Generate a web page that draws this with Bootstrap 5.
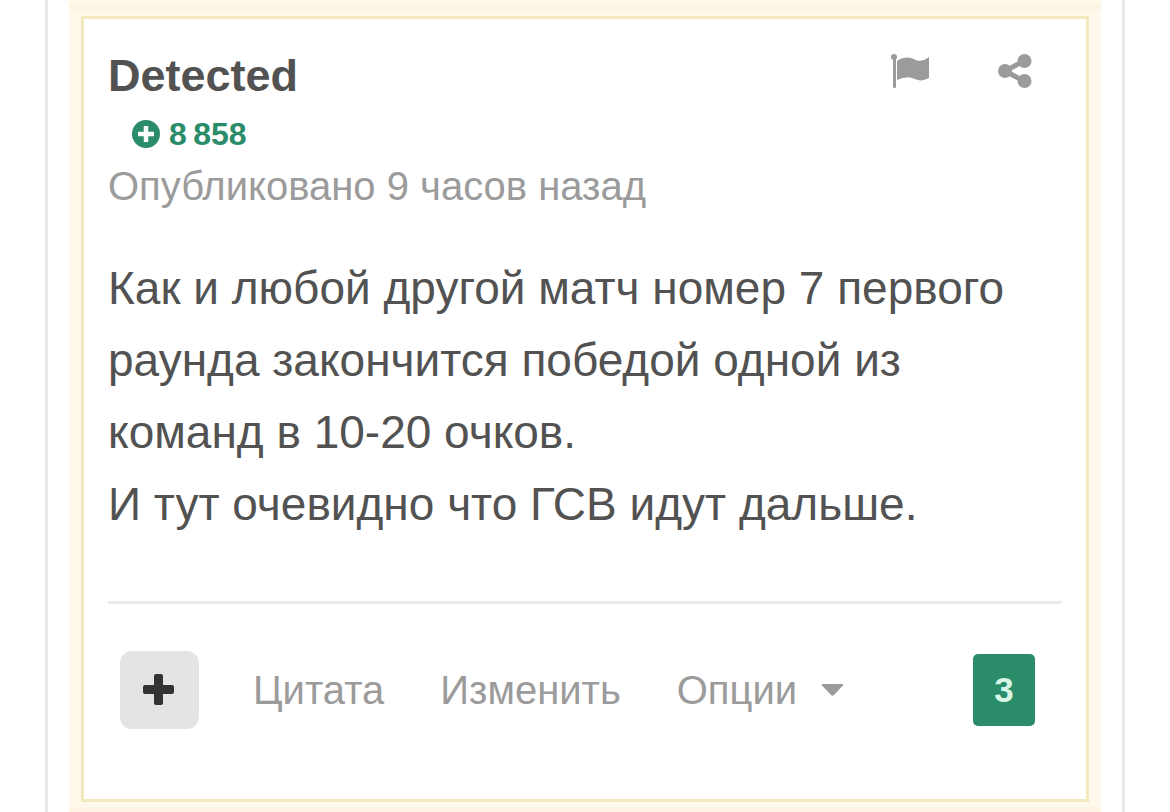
<!DOCTYPE html>
<html lang="ru">
<head>
<meta charset="utf-8">
<meta name="viewport" content="width=device-width, initial-scale=1">
<title>Комментарий</title>
<link href="https://cdn.jsdelivr.net/npm/bootstrap@5.3.0/dist/css/bootstrap.min.css" rel="stylesheet">
<style>
body { font-family: "Liberation Sans", Arial, sans-serif; color: #525252; background: #fff; }
a { text-decoration: none; }
.page-frame { margin: 0 45px; border: solid #e9e9ea; border-width: 0 3px; padding: 0 21px; }
.highlight { background: #fef9eb; padding: 4px 12px 0; }
.highlight::before { content: ""; display: block; height: 6px; margin: 0 -12px 6px; background: #fdf5e4; }
.highlight::after { content: ""; display: block; height: 5px; margin: 5px -12px 0; background: #fdf4e4; }
.post { border: 3px solid #f4e8bd; background: #fff; padding: 32px 24px 70px; }
.author { font-size: 45px; line-height: 50px; font-weight: 700; color: #525252; }
.tools { gap: 67px; margin-right: 29px; padding-top: 2px; }
.muted { color: #9b9b9b; }
.rep { font-size: 32px; line-height: 36px; color: #2a8c68; margin: 15px 0 0 24px; gap: 9px; }
.date { font-size: 40px; line-height: 48px; margin-top: 10px; }
.post-text { font-size: 46px; line-height: 72px; margin: 42px 0 0; padding-right: 24px; }
.rule { border-top: 3px solid #ebebeb; opacity: 1; margin: 61px 0 47px; }
.actions { font-size: 40px; line-height: 48px; padding: 0 27px 0 12px; }
.quick { gap: 56px; }
.text-action { color: #9b9b9b; }
.plus { width: 79px; height: 78px; border-radius: 12px; background: #e4e4e4; color: #333; margin-right: 54px; }
.score { width: 62px; height: 72px; border-radius: 5px; background: #2a8c68; color: #d9f5e6; font-size: 35px; font-weight: 700; }
</style>
</head>
<body>
<main class="page-frame">
  <div class="highlight">
    <article class="post">
      <header>
        <div class="d-flex justify-content-between align-items-start">
          <a href="#" class="author">Detected</a>
          <div class="tools d-flex muted">
            <button type="button" class="btn p-0 border-0 lh-1 muted d-flex" aria-label="Пожаловаться">
              <svg width="40" height="36" viewBox="0 0 40 36" fill="currentColor"><circle cx="4" cy="4" r="3"/><path d="M3 4h3v30q0 1-1.500 1T3 34z"/><path d="M7 8C16 2 22 5 27 7.500Q32 9 39 4V25C33 28 29 28 25 26Q17 22 7 27z"/></svg>
            </button>
            <button type="button" class="btn p-0 border-0 lh-1 muted d-flex" aria-label="Поделиться">
              <svg width="36" height="36" viewBox="0 0 36 36" fill="currentColor"><path d="M8 18 27 8M8 18l19 10" stroke="currentColor" stroke-width="5"/><circle cx="8" cy="18" r="7"/><circle cx="27.500" cy="8" r="7"/><circle cx="27.500" cy="28" r="7"/></svg>
            </button>
          </div>
        </div>
        <div class="rep d-flex align-items-center fw-bold">
          <svg width="28" height="28" viewBox="0 0 28 28" aria-hidden="true"><circle cx="14" cy="14" r="14" fill="#2a8c68"/><path d="M14 6v16M6 14h16" stroke="#fff" stroke-width="4.500"/></svg>
          <span>8&#8201;858</span>
        </div>
        <div class="date muted">Опубликовано 9 часов назад</div>
      </header>
      <p class="post-text">Как и любой другой матч номер 7 первого раунда закончится победой одной из команд в 10-20 очков.<br>И тут очевидно что ГСВ идут дальше.</p>
      <hr class="rule">
      <footer class="actions d-flex align-items-center">
        <button type="button" class="plus btn p-0 border-0 d-flex align-items-center justify-content-center" aria-label="Плюс">
          <svg width="33" height="33" viewBox="0 0 33 33" fill="currentColor"><rect x="11" width="9" height="31" rx="2"/><rect y="11" width="31" height="9" rx="2"/></svg>
        </button>
        <nav class="quick d-flex flex-grow-1">
          <a href="#" class="text-action">Цитата</a>
          <a href="#" class="text-action">Изменить</a>
          <a href="#" class="text-action d-flex align-items-center">Опции
            <svg class="ms-4" width="23" height="14" viewBox="0 0 23 14" fill="currentColor" aria-hidden="true"><path d="M1.500 1h20q1.500 0 .5 1.500l-9 9.500q-1.500 1.500-3 0L1 2.500Q0 1 1.500 1z"/></svg>
          </a>
        </nav>
        <button type="button" class="score btn p-0 border-0">3</button>
      </footer>
    </article>
  </div>
</main>
<script src="https://cdn.jsdelivr.net/npm/bootstrap@5.3.0/dist/js/bootstrap.bundle.min.js"></script>
</body>
</html>
